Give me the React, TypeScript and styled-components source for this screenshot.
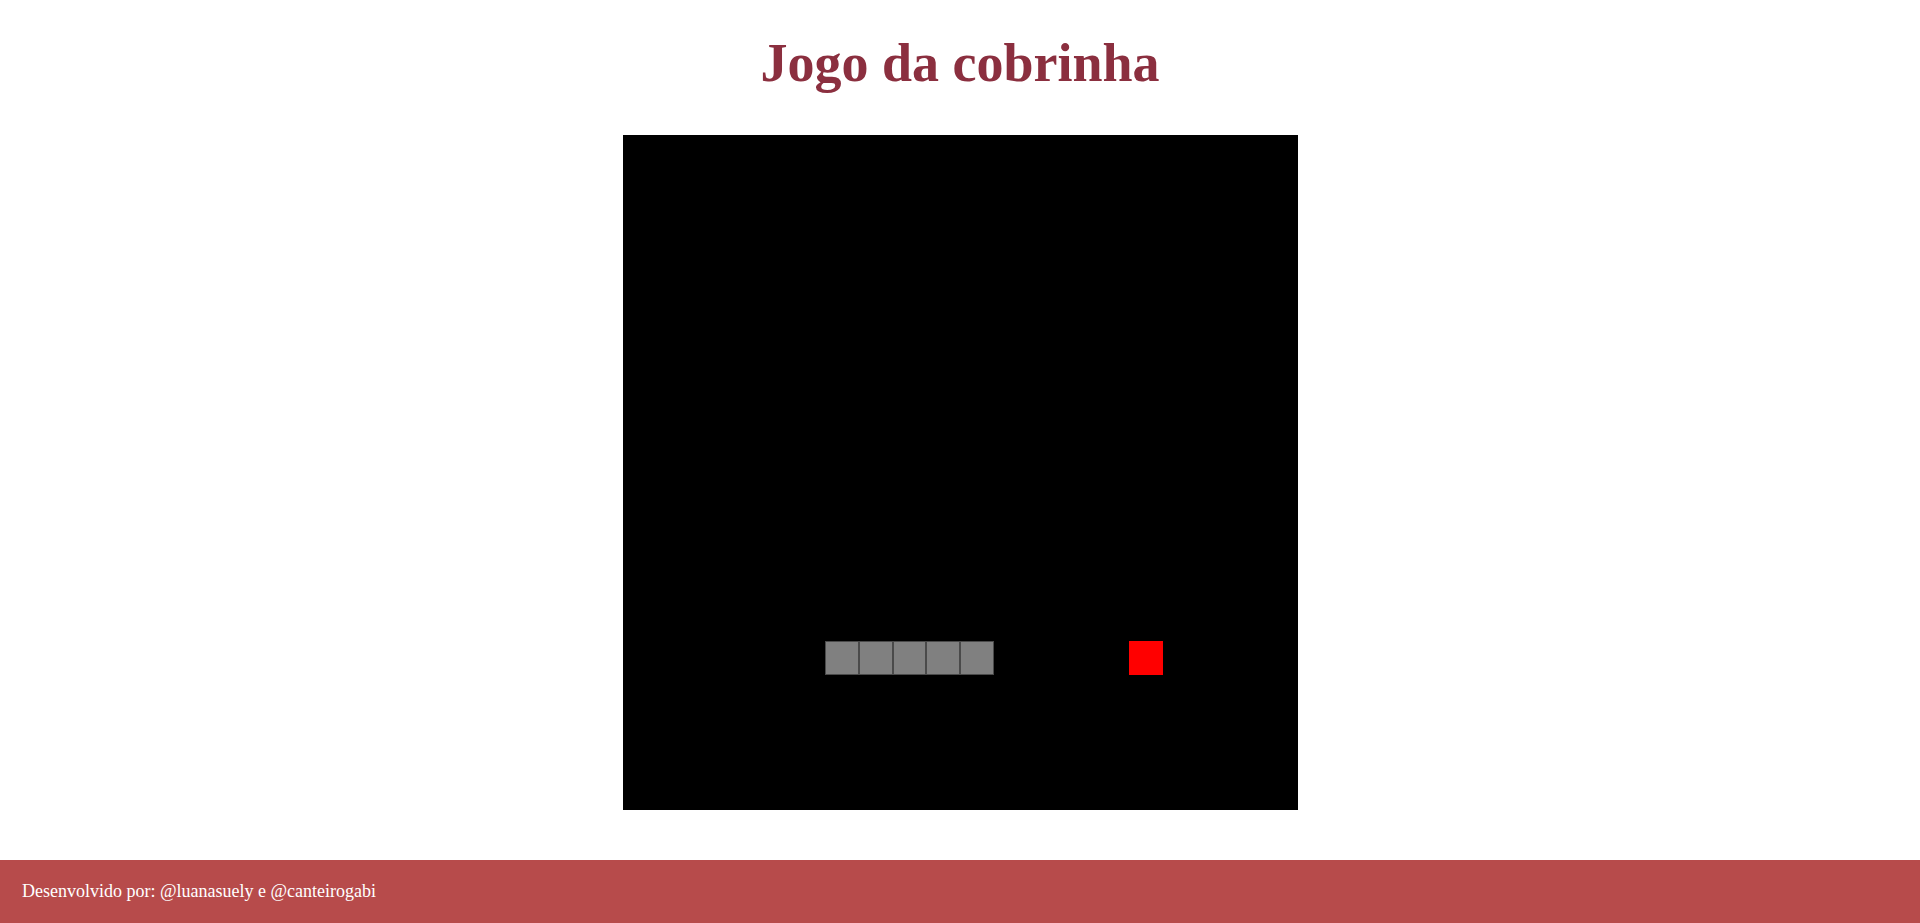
import React from "react";
import styled, { createGlobalStyle } from "styled-components";

const GlobalStyle = createGlobalStyle`
  html, body {
    margin: 0;
    padding: 0;
    background: #ffffff;
  }
  body {
    font-family: "Liberation Serif", "Times New Roman", serif;
  }
`;

const Page = styled.div`
  min-height: 100vh;
  display: flex;
  flex-direction: column;
  align-items: center;
`;

const Title = styled.h1`
  margin: 32px 0 41px;
  font-family: "Liberation Serif", "Times New Roman", serif;
  font-weight: bold;
  font-size: 54px;
  line-height: 62px;
  color: #8b2f3f;
  text-align: center;
`;

const Board = styled.div`
  width: 675px;
  height: 675px;
  background: #000000;
  display: grid;
  grid-template-columns: repeat(20, 1fr);
  grid-template-rows: repeat(20, 1fr);
  margin-bottom: 50px;
`;

const SnakeCell = styled.div<{ $col: number; $row: number }>`
  grid-column: ${(p) => p.$col + 1};
  grid-row: ${(p) => p.$row + 1};
  background: #808080;
  box-shadow: inset 0 0 0 1px #4a4a4a;
`;

const Food = styled.div<{ $col: number; $row: number }>`
  grid-column: ${(p) => p.$col + 1};
  grid-row: ${(p) => p.$row + 1};
  background: #ff0000;
`;

const Footer = styled.footer`
  margin-top: auto;
  align-self: stretch;
  height: 63px;
  background: #b74b4b;
  display: flex;
  align-items: center;
  padding: 0 22px;
  box-sizing: border-box;
  color: #ffffff;
  font-family: "Liberation Serif", "Times New Roman", serif;
  font-size: 18px;
`;

const snake = [
  { col: 6, row: 15 },
  { col: 7, row: 15 },
  { col: 8, row: 15 },
  { col: 9, row: 15 },
  { col: 10, row: 15 },
];
const food = { col: 15, row: 15 };

export default function App() {
  return (
    <>
      <GlobalStyle />
      <Page>
        <Title>Jogo da cobrinha</Title>
        <Board>
          {snake.map((s, i) => (
            <SnakeCell key={i} $col={s.col} $row={s.row} />
          ))}
          <Food $col={food.col} $row={food.row} />
        </Board>
        <Footer>Desenvolvido por: @luanasuely e @canteirogabi</Footer>
      </Page>
    </>
  );
}
